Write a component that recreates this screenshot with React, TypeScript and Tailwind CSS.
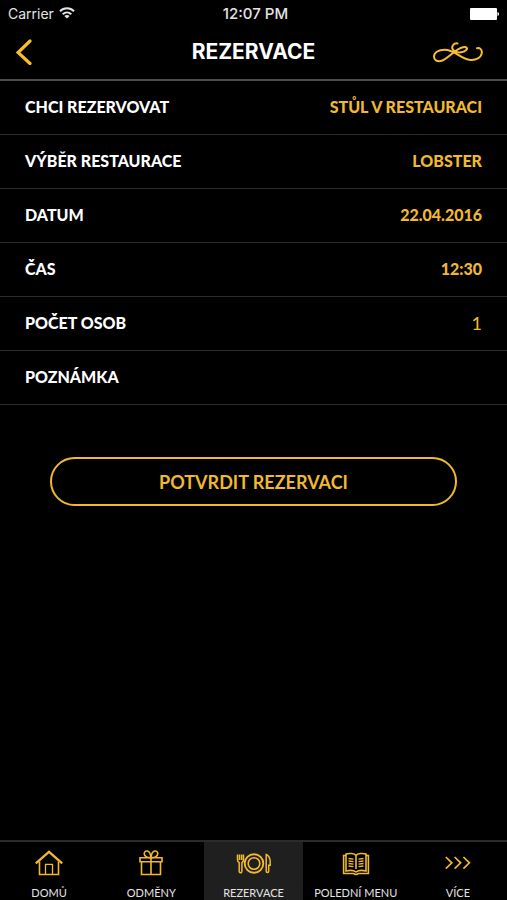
import { useState } from "react";

const tabs = [
  { id: "home", label: "DOMŮ", icon: HomeIcon },
  { id: "rewards", label: "ODMĚNY", icon: GiftIcon },
  { id: "booking", label: "REZERVACE", icon: PlateIcon },
  { id: "menu", label: "POLEDNÍ MENU", icon: BookIcon },
  { id: "more", label: "VÍCE", icon: MoreIcon },
];

const choices = [
  { label: "CHCI REZERVOVAT", value: "STŮL V RESTAURACI" },
  { label: "VÝBĚR RESTAURACE", value: "LOBSTER" },
  { label: "DATUM", value: "22.04.2016" },
  { label: "ČAS", value: "12:30" },
];

function HomeIcon() {
  return (
    <svg width="28" height="28" viewBox="0 0 28 28" fill="none" stroke="currentColor" strokeWidth="1.6">
      <path d="M.8 13.400 14 1.800l13.200 11.600" strokeWidth="2.200" />
      <path d="M4.500 11.500v13h19v-13" />
      <path d="M10.500 24.500V14.400h7v10.100" strokeWidth="1.300" />
    </svg>
  );
}

function GiftIcon() {
  return (
    <svg width="28" height="28" viewBox="0 0 28 28" fill="none" stroke="currentColor" strokeWidth="1.600">
      <path d="M3 7.800h22v4H3zM4.500 11.800h19v12.700h-19zM14 8v16.500" />
      <path d="M14 7.600C10 8 7.200 6 7.200 3.600 7.200 0 13.200-1 14 7.600zM14 7.600c4 .4 6.800-1.600 6.800-4C20.800 0 14.800-1 14 7.600z" />
    </svg>
  );
}

function PlateIcon() {
  return (
    <svg width="36" height="28" viewBox="0 0 36 28" fill="none" stroke="currentColor" strokeWidth="1.500">
      <circle cx="18" cy="13.500" r="9.300" strokeWidth="1.900" />
      <circle cx="18" cy="13.500" r="5.800" strokeWidth="1.600" />
      <path d="M1.500 4.500v5c0 1.800.6 2.600 1.700 3.200v8.600c0 1.900 2.700 1.900 2.700 0v-8.600c1.100-.6 1.600-1.400 1.600-3.200v-5M3.500 4.500V10M5.600 4.500V10" />
      <path d="M30.200 4.500c2.700 1 4 4.300 4 7.800v3h-1.500v5.800c0 2-2.500 2-2.500 0z" />
    </svg>
  );
}

function BookIcon() {
  return (
    <svg width="28" height="28" viewBox="0 0 28 28" fill="none" stroke="currentColor" strokeWidth="1.600">
      <path d="M14 5.500C12.500 3.300 7 3 4 4v17c4-1 8-.6 10 1 2-1.600 6-2 10-1V4c-3-1-8.500-.7-10 1.500zM14 5.500V19" />
      <path d="M4 5.500H1.600v18h10.200c1 1.200 3.400 1.200 4.400 0h10.200v-18H24" />
      <path d="M6.500 8.500l5 .6M6.500 11l5 .6M6.500 13.500l5 .6M6.500 16l5 .6M21.500 8.500l-5 .6M21.500 11l-5 .6M21.500 13.500l-5 .6M21.500 16l-5 .6" strokeWidth="1.400" />
    </svg>
  );
}

function MoreIcon() {
  return (
    <svg width="28" height="28" viewBox="0 0 28 28" fill="none" stroke="currentColor" strokeWidth="1.700">
      <path d="M1.800 7l6 5.800-6 5.800M10.600 7l6 5.800-6 5.800M19.400 7l6 5.800-6 5.800" />
    </svg>
  );
}

function Flourish() {
  return (
    <svg width="52" height="24" viewBox="0 0 52 24" fill="none" stroke="currentColor" strokeWidth="2" strokeLinecap="round">
      <path d="M46 8.200c3-.8 5.200 1.600 4.800 4.800-.7 4.800-5.800 7.400-11.300 7C29.500 19.300 24 9.800 13.500 9.800 7 9.800 3 12.800 3 16.800c0 3.400 3 4.900 6.500 4.300C16.500 20 24 8.600 32 7.200c4-.7 5 1.300 3 3-2.500 2.200-7.200 2.900-10.500 1.500-3-1.300-4-4-2.700-6.200 1.200-2 3-2.500 4.700-2" />
    </svg>
  );
}

function StatusBar() {
  return (
    <div className="grid h-7 grid-cols-3 items-center px-2 font-['Inter',sans-serif] text-sm text-[#e4e4e4]">
      <div className="flex items-center gap-1">
        <span>Carrier</span>
        <svg width="18" height="14" viewBox="0 0 18 14" fill="none" stroke="currentColor" strokeWidth="2">
          <path d="M2 4.200c4-3.900 10-3.900 14 0M4.700 7.200c2.500-2.400 6.100-2.400 8.600 0" />
          <path d="M9 11.600 6.300 9c1.600-1.300 3.800-1.300 5.400 0z" fill="currentColor" stroke="none" />
        </svg>
      </div>
      <span className="pl-1 text-center text-[15px] font-medium">12:07 PM</span>
      <svg className="justify-self-end" width="30" height="12" viewBox="0 0 30 12" fill="#fff">
        <rect x="1" width="27" height="12" rx="1" />
        <path d="M28.500 4c2 .4 2 3.600 0 4z" />
      </svg>
    </div>
  );
}

function App() {
  const [active, setActive] = useState("booking");
  const [persons, setPersons] = useState("1");
  const [note, setNote] = useState("");

  return (
    <div className="flex min-h-screen flex-col bg-black font-['Lato',sans-serif] text-white">
      <StatusBar />
      <header className="grid grid-cols-[1fr_auto_1fr] items-center border-b-2 border-[#4a4a4a] px-4 pt-1 pb-[7px] text-[#f8bc2c]">
        <button type="button" aria-label="Zpět" className="flex h-10 w-10 items-center">
          <svg width="16" height="26" viewBox="0 0 16 26" fill="none" stroke="currentColor" strokeWidth="3.200" strokeLinecap="round">
            <path d="M14 2 2 13.500 14 24.500" />
          </svg>
        </button>
        <h1 className="font-['Inter',sans-serif] text-[21px] font-bold text-white">REZERVACE</h1>
        <div className="justify-self-end pr-2">
          <Flourish />
        </div>
      </header>

      <form className="flex flex-1 flex-col" onSubmit={(e) => e.preventDefault()}>
        {choices.map((item) => (
          <button
            type="button"
            key={item.label}
            className="flex h-[54px] items-center justify-between border-b border-[#2d2d2d] px-[25px] pb-0.5 text-base font-black"
          >
            <span>{item.label}</span>
            <span className="text-[#f0b92f]">{item.value}</span>
          </button>
        ))}
        <div className="flex h-[54px] items-center justify-between gap-4 border-b border-[#2d2d2d] px-[25px] pb-0.5 text-base">
          <label htmlFor="persons" className="font-black">POČET OSOB</label>
          <input
            id="persons"
            inputMode="numeric"
            value={persons}
            onChange={(e) => setPersons(e.target.value)}
            className="min-w-0 flex-1 bg-transparent text-right text-lg text-[#f0b92f] outline-none"
          />
        </div>
        <div className="flex h-[54px] items-center justify-between gap-4 border-b border-[#2d2d2d] px-[25px] pb-0.5 text-base">
          <label htmlFor="note" className="font-black">POZNÁMKA</label>
          <input
            id="note"
            value={note}
            onChange={(e) => setNote(e.target.value)}
            className="min-w-0 flex-1 bg-transparent text-right text-lg text-[#f0b92f] outline-none"
          />
        </div>
        <button
          type="submit"
          className="mx-[50px] mt-[52px] h-[49px] rounded-full border-2 border-[#f0b92f] text-lg font-bold text-[#f0b92f]"
        >
          POTVRDIT REZERVACI
        </button>
      </form>

      <nav className="flex gap-1 border-t-2 border-[#2b2b2b]">
        {tabs.map(({ id, label, icon: Icon }) => (
          <button
            type="button"
            key={id}
            onClick={() => setActive(id)}
            className={`flex flex-1 basis-0 flex-col items-center gap-2 pt-2 ${active === id ? "bg-[#1f1f1f]" : ""}`}
          >
            <span className="text-[#f0b92f]">
              <Icon />
            </span>
            <span className="whitespace-nowrap text-[11px] leading-[14px] text-[#e4e4e4]">{label}</span>
          </button>
        ))}
      </nav>
    </div>
  );
}

export default App;
